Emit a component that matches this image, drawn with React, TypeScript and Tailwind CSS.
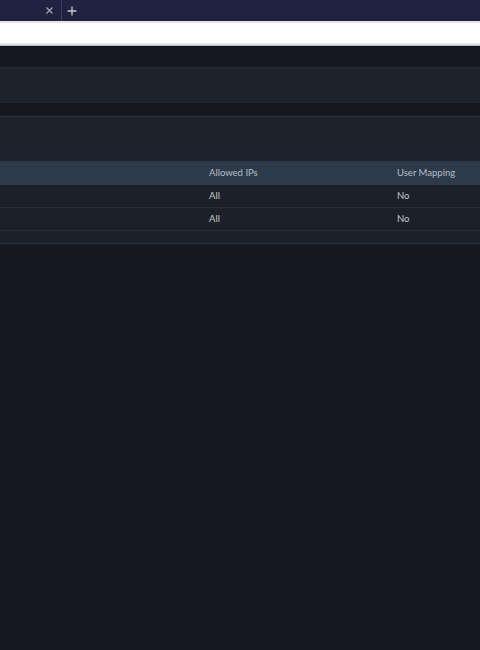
import React from 'react';

const rows = [
  { ips: 'All', mapping: 'No' },
  { ips: 'All', mapping: 'No' },
];

const App: React.FC = () => {
  return (
    <div className="w-[480px] h-[650px] overflow-hidden bg-[#15191f]" style={{ fontFamily: 'Lato, "Noto Sans", sans-serif' }}>
      {/* Browser tab strip */}
      <div className="h-[21px] bg-[#1f2340] flex items-stretch">
        <div className="w-[62px] flex items-center justify-end pr-[8px] border-r border-[#3b3f5c]">
          <svg width="7" height="7" viewBox="0 0 7 7" className="text-[#a7abbd]">
            <path d="M0.5 0.5L6.5 6.5M6.5 0.5L0.5 6.5" stroke="currentColor" strokeWidth="1.1" />
          </svg>
        </div>
        <div className="w-[20px] flex items-center justify-center">
          <svg width="10" height="10" viewBox="0 0 10 10" className="text-[#c9ccd8]">
            <path d="M5 0.5V9.5M0.5 5H9.5" stroke="currentColor" strokeWidth="1.3" />
          </svg>
        </div>
      </div>

      {/* Address bar */}
      <div className="h-[24px] bg-white border-t-[2px] border-b-[2px] border-[#e4e5e8]" />
      <div className="h-px bg-[#b9bcc2]" />

      {/* Page */}
      <div className="h-[21px]" />
      <div className="h-[36px] bg-[#1d232c] border-t-[2px] border-b border-[#232830]" />
      <div className="h-[13px]" />

      <div className="bg-[#1d232c] border-t border-[#2a2f38]">
        <div className="h-[44px]" />

        <div className="grid grid-cols-[209px_188px_1fr] h-[24px] items-center bg-[#2c3a4a] text-[9.5px] leading-none pb-px text-[#b8bfc7]">
          <div />
          <div>Allowed IPs</div>
          <div>User Mapping</div>
        </div>

        {rows.map((r, i) => (
          <div
            key={i}
            className="grid grid-cols-[209px_188px_1fr] h-[23px] items-center bg-[#1c2129] border-b border-[#282e37] text-[9.5px] leading-none pb-px text-[#c5c8cc]"
          >
            <div />
            <div>{r.ips}</div>
            <div>{r.mapping}</div>
          </div>
        ))}
        <div className="h-[13px] bg-[#1c2129] border-b border-[#2b313b]" />
      </div>
    </div>
  );
};

export default App;
